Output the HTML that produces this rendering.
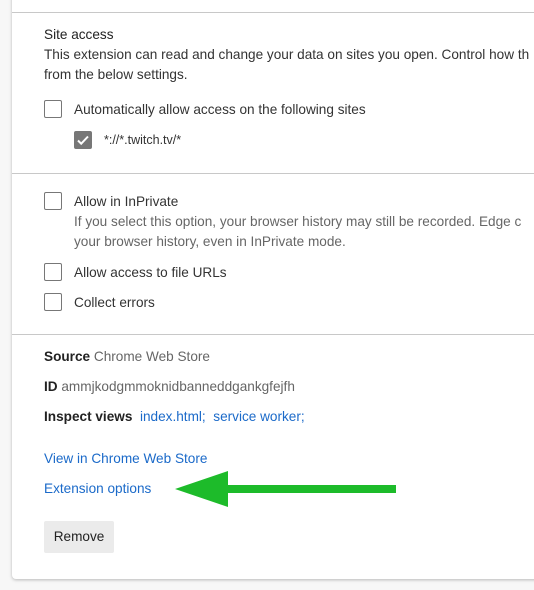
<!DOCTYPE html>
<html><head><style>
body{margin:0;width:534px;height:590px;background:#f7f7f7;font-family:"Liberation Sans",sans-serif;font-size:13.6px;color:#333;position:relative;overflow:hidden}
.card{position:absolute;left:12px;top:-10px;width:540px;height:589px;background:#fff;border-radius:4px;box-shadow:0 1px 3px rgba(0,0,0,.25)}
.hr{position:absolute;left:12px;width:530px;height:1px;background:#c8c8c8}
.t{position:absolute;white-space:nowrap}
.cb{position:absolute;width:18px;height:18px;border:1px solid #777;border-radius:2px;box-sizing:border-box;background:#fff}
.g{color:#666}
a{color:#1b6ac9;text-decoration:none}
b{font-weight:bold;color:#222}
</style></head><body>
<div class="card"></div>
<div class="hr" style="top:12px"></div>
<div class="hr" style="top:173px"></div>
<div class="hr" style="top:334px"></div>
<div class="t" style="left:44px;top:27px;color:#222">Site access</div>
<div class="t" style="left:44px;top:47px">This extension can read and change your data on sites you open. Control how th</div>
<div class="t" style="left:44px;top:67px">from the below settings.</div>
<div class="cb" style="left:44px;top:100px"></div>
<div class="t" style="left:74px;top:102px">Automatically allow access on the following sites</div>
<div class="cb" style="left:74px;top:131px;background:#777;border-color:#777"><svg width="18" height="18" style="position:absolute;left:-1px;top:-1px"><path d="M4 9.5l3.2 3.2L14 5.5" stroke="#fff" stroke-width="2" fill="none"/></svg></div>
<div class="t" style="left:104px;top:133px;font-size:12.5px">*://*.twitch.tv/*</div>
<div class="cb" style="left:44px;top:192px"></div>
<div class="t" style="left:74px;top:194px">Allow in InPrivate</div>
<div class="t g" style="left:74px;top:214px">If you select this option, your browser history may still be recorded. Edge c</div>
<div class="t g" style="left:74px;top:234px">your browser history, even in InPrivate mode.</div>
<div class="cb" style="left:44px;top:263px"></div>
<div class="t" style="left:74px;top:265px">Allow access to file URLs</div>
<div class="cb" style="left:44px;top:293px"></div>
<div class="t" style="left:74px;top:295px">Collect errors</div>
<div class="t" style="left:44px;top:349px"><b>Source</b> <span class="g">Chrome Web Store</span></div>
<div class="t" style="left:44px;top:379px"><b>ID</b> <span class="g">ammjkodgmmoknidbanneddgankgfejfh</span></div>
<div class="t" style="left:44px;top:409px"><b>Inspect views</b>&nbsp; <a>index.html;</a>&nbsp; <a>service worker;</a></div>
<div class="t" style="left:44px;top:451px"><a>View in Chrome Web Store</a></div>
<div class="t" style="left:44px;top:481px"><a>Extension options</a></div>
<svg style="position:absolute;left:0;top:0" width="534" height="590"><path d="M175 489L228 471V485H396V493H228V507Z" fill="#1dbb2a"/></svg>
<div style="position:absolute;left:44px;top:521px;width:70px;height:32px;background:#ebebeb;border-radius:2px;text-align:center;line-height:32px;color:#222">Remove</div>
</body></html>
